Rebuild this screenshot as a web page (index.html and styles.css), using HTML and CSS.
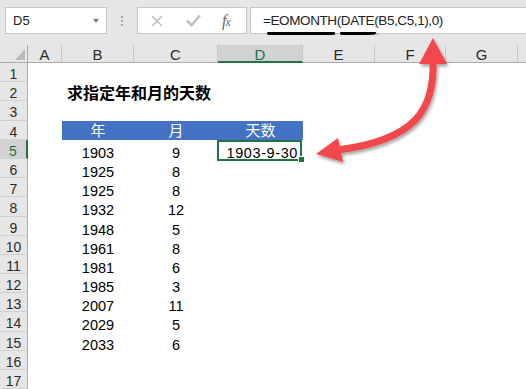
FILE: index.html
```html
<!DOCTYPE html>
<html lang="zh">
<head>
<meta charset="utf-8">
<title>EOMONTH</title>
<link rel="stylesheet" href="styles.css">
</head>
<body>
<div class="app">
  <div class="toolbar">
    <div class="namebox"><span>D5</span><span class="dd"></span></div>
    <div class="grip"><i></i><i></i><i></i></div>
    <div class="fxbox">
      <svg class="ico" width="12" height="12" viewBox="0 0 12 12"><path d="M1 1 L11 11 M11 1 L1 11" stroke="#b9b9b9" stroke-width="1.4" fill="none"/></svg>
      <svg class="ico chk" width="15" height="13" viewBox="0 0 15 13"><path d="M1 6.5 L5.5 11 L14 1.5" stroke="#c0c0c0" stroke-width="2.6" fill="none"/></svg>
      <span class="fx">f<sub>x</sub></span>
    </div>
    <div class="formula">=EOMONTH(DATE(B5,C5,1),0)</div>
  </div>
  <div class="sheet">
    <div class="corner"></div>
    <div class="ch">A</div><div class="ch">B</div><div class="ch">C</div><div class="ch sel">D</div><div class="ch">E</div><div class="ch">F</div><div class="ch">G</div><div class="ch last"></div>

    <div class="rh">1</div><div class="fill2"></div>
    <div class="rh">2</div><div class="c"></div><div class="c title">求指定年和月的天数</div>
    <div class="rh">3</div><div class="fill2"></div>
    <div class="rh">4</div><div class="c"></div><div class="c hd">年</div><div class="c hd">月</div><div class="c hd">天数</div><div class="fill6"></div>
    <div class="rh sel">5</div><div class="c"></div><div class="c">1903</div><div class="c">9</div><div class="c active"><span class="date">1903-9-30</span><span class="selbox"></span><span class="handle"></span></div><div class="fill6"></div>
    <div class="rh">6</div><div class="c"></div><div class="c">1925</div><div class="c">8</div><div class="fill5"></div>
    <div class="rh">7</div><div class="c"></div><div class="c">1925</div><div class="c">8</div><div class="fill5"></div>
    <div class="rh">8</div><div class="c"></div><div class="c">1932</div><div class="c">12</div><div class="fill5"></div>
    <div class="rh">9</div><div class="c"></div><div class="c">1948</div><div class="c">5</div><div class="fill5"></div>
    <div class="rh">10</div><div class="c"></div><div class="c">1961</div><div class="c">8</div><div class="fill5"></div>
    <div class="rh">11</div><div class="c"></div><div class="c">1981</div><div class="c">6</div><div class="fill5"></div>
    <div class="rh">12</div><div class="c"></div><div class="c">1985</div><div class="c">3</div><div class="fill5"></div>
    <div class="rh">13</div><div class="c"></div><div class="c">2007</div><div class="c">11</div><div class="fill5"></div>
    <div class="rh">14</div><div class="c"></div><div class="c">2029</div><div class="c">5</div><div class="fill5"></div>
    <div class="rh">15</div><div class="c"></div><div class="c">2033</div><div class="c">6</div><div class="fill5"></div>
    <div class="rh">16</div><div class="fill2"></div>
    <div class="rh">17</div><div class="fill2"></div>
  </div>
  <svg class="annot" width="526" height="389" viewBox="0 0 526 389">
    <defs>
      <filter id="sh" x="-30%" y="-30%" width="160%" height="160%">
        <feDropShadow dx="1.5" dy="2.5" stdDeviation="1.6" flood-color="#000" flood-opacity="0.35"/>
      </filter>
    </defs>
    <g filter="url(#sh)" stroke="#000" stroke-width="4" stroke-linecap="round" fill="none">
      <path d="M269 33 Q300 34.5 333 33"/>
      <path d="M342 33 Q358 34 374 32.5"/>
    </g>
    <g filter="url(#sh)" fill="#f2474b">
      <path d="M433 60 C 435 110, 415 140, 338 150" stroke="#f2474b" stroke-width="7" fill="none"/>
      <polygon points="433,38 419,64 447,64"/>
      <polygon points="316,154 338,138 343,162"/>
    </g>
  </svg>
</div>
</body>
</html>
```

FILE: styles.css
```css
body {
  margin: 0;
  background: #fff;
  font-family: "Liberation Sans", "Noto Sans CJK SC", sans-serif;
  overflow: hidden;
}
.app {
  position: relative;
  width: 526px;
  height: 389px;
  overflow: hidden;
}
.toolbar {
  display: flex;
  align-items: flex-start;
  height: 45px;
  box-sizing: border-box;
  padding: 7px 0 0 5px;
  background: #e6e6e6;
}
.namebox {
  width: 102px;
  height: 27px;
  box-sizing: border-box;
  border: 1px solid #c6c6c6;
  background: #fff;
  display: flex;
  align-items: center;
  justify-content: space-between;
  padding: 0 7px 0 7px;
  font-size: 13px;
  color: #222;
}
.dd {
  width: 0;
  height: 0;
  border-left: 3.5px solid transparent;
  border-right: 3.5px solid transparent;
  border-top: 4px solid #7a7a7a;
}
.grip {
  width: 30px;
  display: flex;
  flex-direction: column;
  align-items: center;
  gap: 2px;
  padding-top: 9px;
}
.grip i {
  display: block;
  width: 2px;
  height: 2px;
  background: #a8a8a8;
}
.fxbox {
  width: 110px;
  height: 27px;
  box-sizing: border-box;
  border: 1px solid #c6c6c6;
  background: #fff;
  display: flex;
  align-items: center;
  padding-left: 13px;
}
.ico { display: block; }
.chk { margin-left: 23px; }
.fx {
  margin-left: 21px;
  font-family: "Liberation Serif", serif;
  font-style: italic;
  font-size: 16px;
  color: #666;
  line-height: 1;
}
.fx sub {
  font-size: 12px;
  vertical-align: 0;
  margin-left: -1px;
}
.formula {
  flex: 1;
  height: 27px;
  box-sizing: border-box;
  margin-left: 3px;
  margin-right: -3px;
  border: 1px solid #c6c6c6;
  background: #fff;
  padding-left: 12px;
  font-size: 13.5px;
  letter-spacing: -0.4px;
  line-height: 25px;
  color: #222;
}
.sheet {
  display: grid;
  grid-template-columns: 28px 34px 72px 84px 85px 72px 71px 72px 1fr;
  grid-template-rows: 18px repeat(17, 19.2px);
}
.sheet > div { box-sizing: border-box; }
.corner {
  position: relative;
  background: #e6e6e6;
  border-right: 1px solid #ababab;
  border-bottom: 1px solid #ababab;
}
.corner::after {
  content: "";
  position: absolute;
  right: 2px;
  bottom: 2px;
  width: 0;
  height: 0;
  border-left: 10px solid transparent;
  border-bottom: 11px solid #bababa;
}
.ch {
  background: #e6e6e6;
  border-right: 1px solid #c6c6c6;
  border-bottom: 1px solid #ababab;
  text-align: center;
  font-size: 15px;
  line-height: 18px;
  padding-top: 1px;
  color: #2b2b2b;
}
.ch.sel {
  background: #d2d2d2;
  color: #217346;
  border-bottom: 2px solid #217346;
}
.ch.last { border-right: none; }
.rh {
  background: #e6e6e6;
  border-right: 1px solid #ababab;
  border-bottom: 1px solid #d0d0d0;
  text-align: center;
  font-size: 14px;
  line-height: 16px;
  padding-top: 3px;
  color: #2b2b2b;
}
.rh.sel {
  background: #d2d2d2;
  color: #217346;
  border-right: 2px solid #217346;
}
.c {
  font-size: 14.5px;
  line-height: 16px;
  padding-top: 5px;
  text-align: center;
  color: #000;
}
.fill2 { grid-column: 2 / -1; }
.fill5 { grid-column: 5 / -1; }
.fill6 { grid-column: 6 / -1; }
.title {
  grid-column: 3 / -1;
  text-align: left;
  padding-left: 5px;
  padding-top: 2px;
  font-family: "Noto Sans CJK SC", sans-serif;
  font-weight: bold;
  font-size: 16px;
  white-space: nowrap;
}
.hd {
  background: #4472c4;
  color: #fff;
  font-family: "Noto Sans CJK SC", sans-serif;
  font-size: 15px;
  padding-top: 1px;
}
.active {
  position: relative;
  text-align: right;
  padding-right: 5px;
}
.date { letter-spacing: 0.6px; }
.selbox {
  position: absolute;
  left: -1px;
  top: 0;
  right: 1px;
  bottom: -2px;
  border: 2px solid #217346;
}
.handle {
  position: absolute;
  right: -2px;
  bottom: -4px;
  width: 5px;
  height: 5px;
  background: #217346;
  border: 1px solid #fff;
}
.annot {
  position: absolute;
  left: 0;
  top: 0;
  pointer-events: none;
}
```
